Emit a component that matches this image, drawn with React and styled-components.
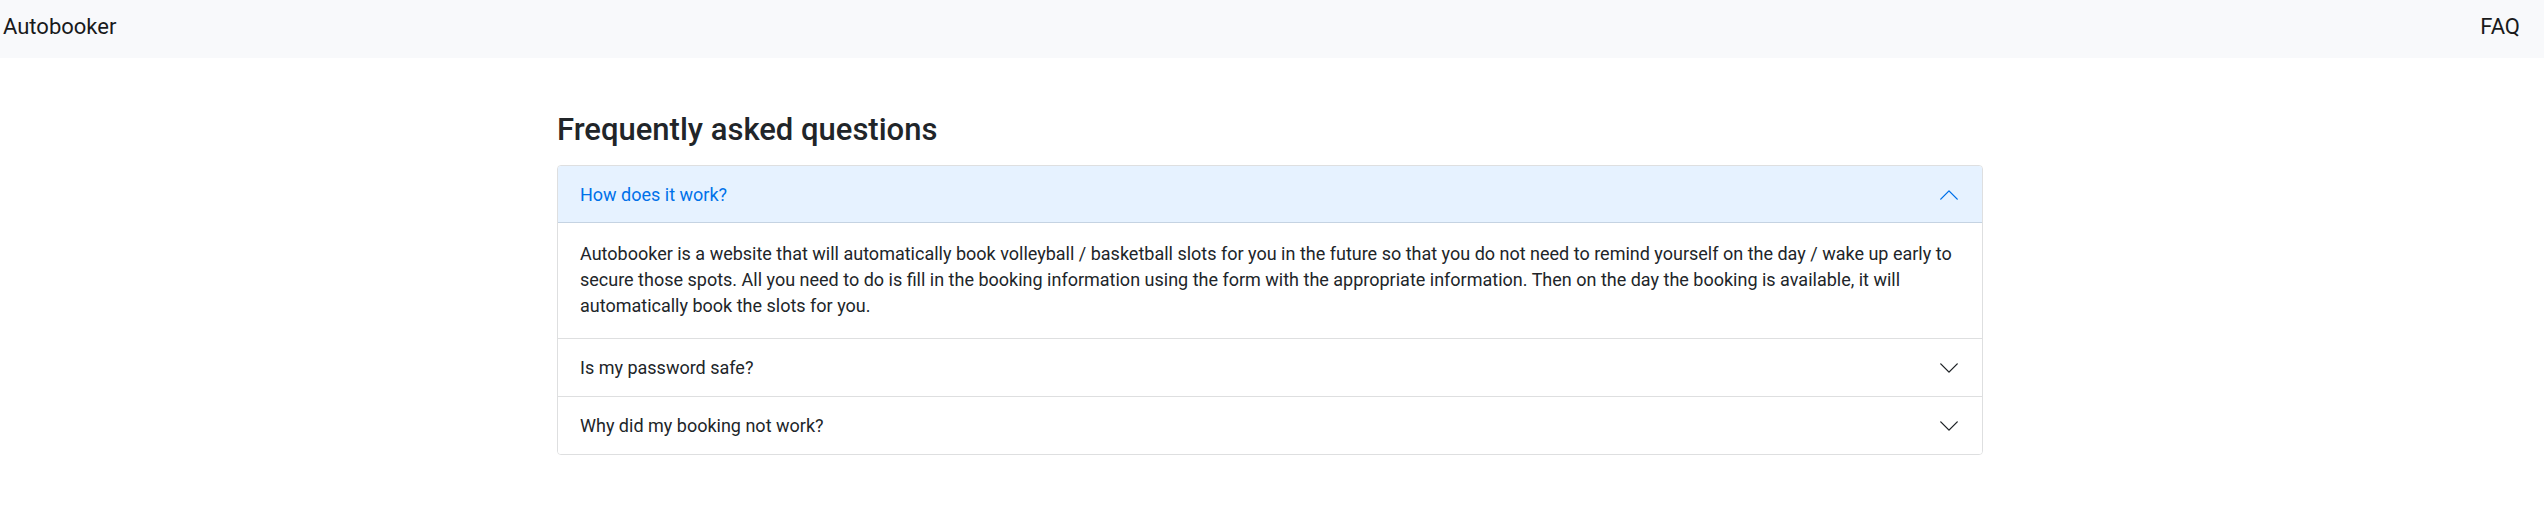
import React, { useState } from "react";
import styled, { createGlobalStyle } from "styled-components";

const GlobalStyle = createGlobalStyle`
  *, *::before, *::after { box-sizing: border-box; }
  body {
    margin: 0;
    background: #fff;
    color: #212529;
    font-family: Roboto, Inter, "Liberation Sans", sans-serif;
    font-size: 18px;
    line-height: 26px;
  }
`;

const Navbar = styled.nav`
  display: flex;
  align-items: center;
  justify-content: space-between;
  padding: 10px 24px 15px 3px;
  background: #f8f9fb;
`;

const NavLink = styled.a`
  color: #191a1b;
  font-size: 22px;
  line-height: 33px;
  text-decoration: none;
`;

const Container = styled.main`
  width: 100%;
  max-width: 1454px;
  margin: 0 auto;
  padding: 53px 16px 52px 12px;
`;

const Title = styled.h1`
  margin: 0 0 16px;
  font-size: 31px;
  font-weight: 500;
  line-height: 38px;
`;

const Accordion = styled.div`
  overflow: hidden;
  border: 1px solid #dedfe0;
  border-radius: 4px;
`;

const Item = styled.section`
  & + & { border-top: 1px solid #dedfe0; }
`;

const ItemHeading = styled.h2`
  margin: 0;
  font: inherit;
`;

const ItemButton = styled.button`
  display: flex;
  align-items: center;
  justify-content: space-between;
  width: 100%;
  padding: 16px 22px 15px;
  border: 0;
  background: ${({ $open }) => ($open ? "#e6f2ff" : "#fff")};
  box-shadow: ${({ $open }) => ($open ? "inset 0 -1px 0 #c5d3e2" : "none")};
  color: ${({ $open }) => ($open ? "#0071e9" : "#212529")};
  font: inherit;
  text-align: left;
  cursor: pointer;
`;

const Chevron = styled.svg`
  width: 22px;
  height: 22px;
  flex: none;
  transform: ${({ $open }) => ($open ? "rotate(180deg)" : "none")};
`;

const Answer = styled.div`
  padding: 18px 22px 19px;
`;

const questions = [
  {
    id: "how",
    question: "How does it work?",
    answer:
      "Autobooker is a website that will automatically book volleyball / basketball slots for you in the future so that you do not need to remind yourself on the day / wake up early to secure those spots. All you need to do is fill in the booking information using the form with the appropriate information. Then on the day the booking is available, it will automatically book the slots for you.",
  },
  { id: "password", question: "Is my password safe?" },
  { id: "failed", question: "Why did my booking not work?" },
];

function Question({ id, question, answer, open, onToggle }) {
  return (
    <Item>
      <ItemHeading>
        <ItemButton
          type="button"
          id={`${id}-button`}
          aria-expanded={open}
          $open={open}
          onClick={onToggle}
        >
          {question}
          <Chevron viewBox="0 0 16 16" fill="currentColor" aria-hidden="true" $open={open}>
            <path
              fillRule="evenodd"
              d="M1.646 4.646a.5.5 0 0 1 .708 0L8 10.293l5.646-5.647a.5.5 0 0 1 .708.708l-6 6a.5.5 0 0 1-.708 0l-6-6a.5.5 0 0 1 0-.708z"
            />
          </Chevron>
        </ItemButton>
      </ItemHeading>
      {open && answer && (
        <Answer role="region" aria-labelledby={`${id}-button`}>
          {answer}
        </Answer>
      )}
    </Item>
  );
}

export default function App() {
  const [openId, setOpenId] = useState("how");
  return (
    <>
      <GlobalStyle />
      <Navbar>
        <NavLink href="#home">Autobooker</NavLink>
        <NavLink href="#faq">FAQ</NavLink>
      </Navbar>
      <Container>
        <Title>Frequently asked questions</Title>
        <Accordion>
          {questions.map((item) => (
            <Question
              key={item.id}
              {...item}
              open={openId === item.id}
              onToggle={() => setOpenId(openId === item.id ? null : item.id)}
            />
          ))}
        </Accordion>
      </Container>
    </>
  );
}
